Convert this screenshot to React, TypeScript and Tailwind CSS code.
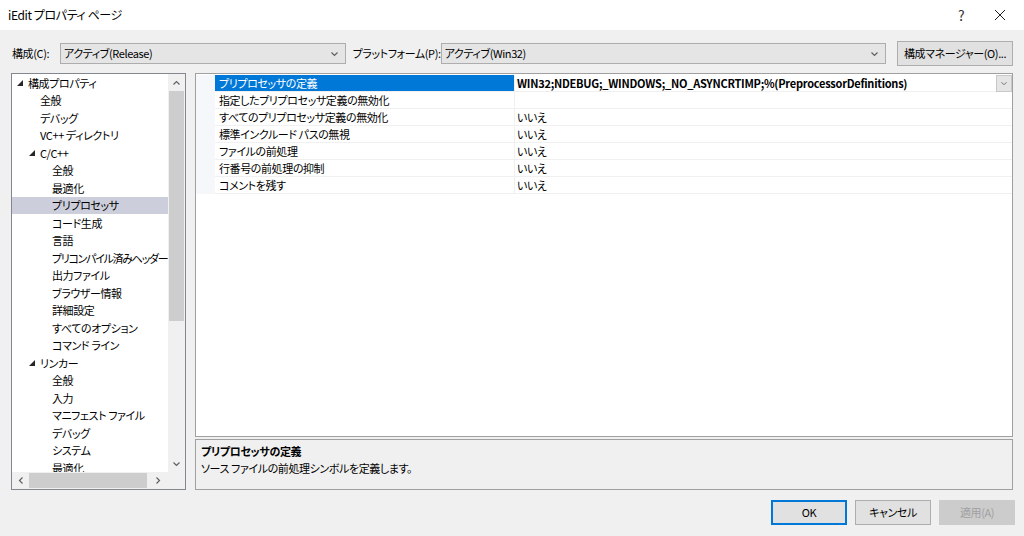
import React from "react";

const font = "font-['Noto_Sans_CJK_JP','Noto_Sans',sans-serif] [font-feature-settings:'palt'] tracking-[-0.4px]";

type Node = { label: string; level: number; open?: boolean; selected?: boolean; tight?: boolean };

const tree: Node[] = [
  { label: "構成プロパティ", level: 0, open: true },
  { label: "全般", level: 1 },
  { label: "デバッグ", level: 1 },
  { label: "VC++ ディレクトリ", level: 1 },
  { label: "C/C++", level: 1, open: true },
  { label: "全般", level: 2 },
  { label: "最適化", level: 2 },
  { label: "プリプロセッサ", level: 2, selected: true },
  { label: "コード生成", level: 2 },
  { label: "言語", level: 2 },
  { label: "プリコンパイル済みヘッダー", level: 2, tight: true },
  { label: "出力ファイル", level: 2 },
  { label: "ブラウザー情報", level: 2 },
  { label: "詳細設定", level: 2 },
  { label: "すべてのオプション", level: 2 },
  { label: "コマンド ライン", level: 2 },
  { label: "リンカー", level: 1, open: true },
  { label: "全般", level: 2 },
  { label: "入力", level: 2 },
  { label: "マニフェスト ファイル", level: 2 },
  { label: "デバッグ", level: 2 },
  { label: "システム", level: 2 },
  { label: "最適化", level: 2 },
];

const props = [
  { name: "プリプロセッサの定義", value: "WIN32;NDEBUG;_WINDOWS;_NO_ASYNCRTIMP;%(PreprocessorDefinitions)", selected: true },
  { name: "指定したプリプロセッサ定義の無効化", value: "" },
  { name: "すべてのプリプロセッサ定義の無効化", value: "いいえ" },
  { name: "標準インクルード パスの無視", value: "いいえ" },
  { name: "ファイルの前処理", value: "いいえ" },
  { name: "行番号の前処理の抑制", value: "いいえ" },
  { name: "コメントを残す", value: "いいえ" },
];

function Chevron({ dir, className = "" }: { dir: "up" | "down" | "left" | "right"; className?: string }) {
  const d = {
    up: "M1 6 L5 2 L9 6",
    down: "M1 2 L5 6 L9 2",
    left: "M6 1 L2 5 L6 9",
    right: "M2 1 L6 5 L2 9",
  }[dir];
  const vb = dir === "up" || dir === "down" ? "0 0 10 8" : "0 0 8 10";
  return (
    <svg viewBox={vb} className={className} fill="none" stroke="currentColor" strokeWidth="1.6">
      <path d={d} />
    </svg>
  );
}

function Expander() {
  return (
    <svg viewBox="0 0 6 6" className="w-[6px] h-[6px]">
      <polygon points="6,0 6,6 0,6" fill="#262626" />
    </svg>
  );
}

function Combo({ text, width }: { text: string; width: string }) {
  return (
    <div className={`${width} h-[21px] bg-[#e5e5e5] border border-[#adadad] flex items-center pl-[3px] pr-[6px] whitespace-nowrap`}>
      <span className="flex-1">{text}</span>
      <Chevron dir="down" className="text-[#606060] w-[9px] h-[6px]" />
    </div>
  );
}

function Button({ label, primary, disabled }: { label: string; primary?: boolean; disabled?: boolean }) {
  const cls = disabled
    ? "bg-[#cccccc] border-[#cccccc] text-[#a0a0a0]"
    : primary
      ? "bg-[#e1e1e1] border-[#0078d7] border-2 text-black"
      : "bg-[#e1e1e1] border-[#adadad] text-black";
  return (
    <div className={`w-[76px] h-[25px] border flex items-center justify-center whitespace-nowrap ${cls}`}>{label}</div>
  );
}

export default function App() {
  return (
    <div className={`w-[1024px] h-[536px] bg-[#f0f0f0] flex flex-col text-[11px] text-black overflow-hidden ${font}`}>
      {/* title bar */}
      <div className="h-[30px] bg-white flex items-center pl-[8px] shrink-0 text-[12px]">
        <span className="flex-1">iEdit プロパティ ページ</span>
        <span className="w-[46px] text-center text-[14px] text-[#333]">?</span>
        <svg viewBox="0 0 12 12" className="w-[12px] h-[12px] mr-[18px] ml-[10px]" stroke="#222" strokeWidth="1">
          <path d="M1 1 L11 11 M11 1 L1 11" />
        </svg>
      </div>

      {/* configuration row */}
      <div className="h-[25px] mt-[11px] flex items-center pl-[12px] pr-[11px] shrink-0 whitespace-nowrap">
        <span className="w-[48px]">構成(C):</span>
        <Combo text="アクティブ(Release)" width="w-[286px]" />
        <span className="ml-[7px] w-[88px]">プラットフォーム(P):</span>
        <Combo text="アクティブ(Win32)" width="w-[446px]" />
        <div className="ml-[11px] w-[116px] h-[25px] bg-[#e1e1e1] border border-[#adadad] flex items-center justify-center">
          構成マネージャー(O)...
        </div>
      </div>

      {/* main area */}
      <div className="mt-[7px] h-[417px] flex pl-[11px] pr-[11px] shrink-0">
        {/* tree */}
        <div className="w-[175px] border border-[#828790] bg-white flex flex-col">
          <div className="flex-1 flex min-h-0">
            <div className="flex-1 overflow-hidden">
              {tree.map((n, i) => (
                <div
                  key={i}
                  className={`h-[17.5px] flex items-center whitespace-nowrap ${n.selected ? "bg-[#cccedb]" : ""}`}
                >
                  <div
                    className={`shrink-0 flex items-center ${
                      n.level === 0 ? "w-[16px] pl-[5px]" : n.level === 1 ? "w-[28px] pl-[17px]" : "w-[40px]"
                    }`}
                  >
                    {n.open && <Expander />}
                  </div>
                  <span className={n.tight ? "tracking-[-1.3px]" : ""}>{n.label}</span>
                </div>
              ))}
            </div>
            {/* vertical scrollbar */}
            <div className="w-[17px] bg-[#f0f0f0] flex flex-col items-center">
              <div className="h-[17px] flex items-center justify-center text-[#606060]">
                <Chevron dir="up" className="w-[9px] h-[6px]" />
              </div>
              <div className="w-[15px] h-[230px] bg-[#cdcdcd]" />
              <div className="flex-1" />
              <div className="h-[17px] flex items-center justify-center text-[#606060]">
                <Chevron dir="down" className="w-[9px] h-[6px]" />
              </div>
            </div>
          </div>
          {/* horizontal scrollbar */}
          <div className="h-[17px] bg-[#f0f0f0] flex items-center shrink-0">
            <div className="w-[17px] flex items-center justify-center text-[#606060]">
              <Chevron dir="left" className="w-[6px] h-[9px]" />
            </div>
            <div className="w-[118px] h-[15px] bg-[#cdcdcd]" />
            <div className="w-[22px] flex items-center justify-center text-[#606060]">
              <Chevron dir="right" className="w-[6px] h-[9px]" />
            </div>
            <div className="flex-1" />
          </div>
        </div>

        {/* right side */}
        <div className="ml-[9px] flex-1 flex flex-col">
          <div className="h-[364px] border border-[#a0a0a0] bg-white pt-[1px] flex flex-col">
            {props.map((p, i) => (
              <div key={i} className="h-[17px] flex">
                <div className="w-[19px] bg-[#f5f7fa]" />
                <div
                  className={`w-[300px] pl-[4px] flex items-center border-b border-r border-[#f0f0f0] whitespace-nowrap ${
                    p.selected ? "bg-[#0078d7] text-white border-[#0078d7]" : ""
                  }`}
                >
                  {p.name}
                </div>
                <div
                  className={`flex-1 pl-[2px] flex items-center border-b border-[#f0f0f0] ${
                    p.selected ? "font-bold tracking-[-0.25px]" : ""
                  }`}
                >
                  <span className="flex-1 whitespace-nowrap">{p.value}</span>
                  {p.selected && (
                    <div className="w-[16px] h-[17px] bg-[#e5e5e5] border border-[#c8c8c8] flex items-center justify-center text-[#707070]">
                      <Chevron dir="down" className="w-[8px] h-[5px]" />
                    </div>
                  )}
                </div>
              </div>
            ))}
          </div>
          <div className="mt-[2px] h-[51px] border border-[#a0a0a0] pl-[5px] pt-[3px] flex flex-col">
            <span className="font-bold leading-[17px]">プリプロセッサの定義</span>
            <span className="leading-[17px]">ソース ファイルの前処理シンボルを定義します。</span>
          </div>
        </div>
      </div>

      {/* buttons */}
      <div className="mt-[10px] flex justify-end gap-[8px] pr-[9px]">
        <Button label="OK" primary />
        <Button label="キャンセル" />
        <Button label="適用(A)" disabled />
      </div>
    </div>
  );
}
